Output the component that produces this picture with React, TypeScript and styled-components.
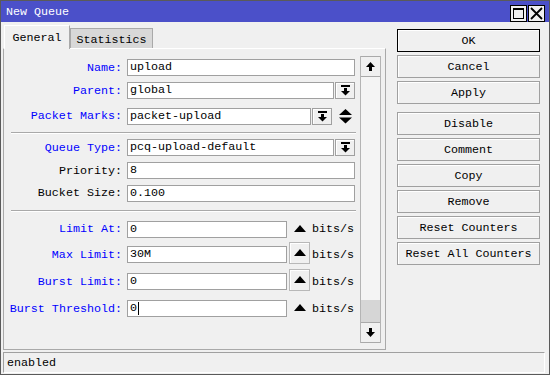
import styled, { createGlobalStyle } from "styled-components";

const GlobalStyle = createGlobalStyle`
  html, body {
    margin: 0;
    padding: 0;
    background: #f0f0f0;
  }
  body {
    font-family: "Liberation Mono", "DejaVu Sans Mono", monospace;
    font-size: 11.7px;
    color: #000;
  }
  * {
    box-sizing: border-box;
  }
`;

const BLUE = "#0000ff";

type FieldRow = {
  label: string;
  value: string;
  blue: boolean;
  height: number;
  kind: "text" | "select" | "marks" | "limit";
  arrow?: "plain" | "boxed";
  caret?: boolean;
};

const topRows: FieldRow[] = [
  { label: "Name:", value: "upload", blue: true, height: 23, kind: "text" },
  { label: "Parent:", value: "global", blue: true, height: 23, kind: "select" },
  { label: "Packet Marks:", value: "packet-upload", blue: true, height: 28, kind: "marks" },
];

const midRows: FieldRow[] = [
  { label: "Queue Type:", value: "pcq-upload-default", blue: true, height: 23, kind: "select" },
  { label: "Priority:", value: "8", blue: false, height: 23, kind: "text" },
  { label: "Bucket Size:", value: "0.100", blue: false, height: 22, kind: "text" },
];

const limitRows: FieldRow[] = [
  { label: "Limit At:", value: "0", blue: true, height: 24, kind: "limit", arrow: "plain" },
  { label: "Max Limit:", value: "30M", blue: true, height: 27, kind: "limit", arrow: "boxed" },
  { label: "Burst Limit:", value: "0", blue: true, height: 27, kind: "limit", arrow: "boxed" },
  { label: "Burst Threshold:", value: "0", blue: true, height: 27, kind: "limit", arrow: "plain", caret: true },
];

const actions = [
  "OK",
  "Cancel",
  "Apply",
  "Disable",
  "Comment",
  "Copy",
  "Remove",
  "Reset Counters",
  "Reset All Counters",
];

const DropIcon = () => (
  <svg width="9" height="11" viewBox="0 0 9 11">
    <rect x="0" y="0" width="9" height="2" fill="#000" />
    <rect x="3" y="3" width="3" height="3" fill="#000" />
    <polygon points="0,6 9,6 4.5,10.5" fill="#000" />
  </svg>
);

const TriangleUp = () => (
  <svg width="12" height="7" viewBox="0 0 12 7">
    <polygon points="6,0 12,7 0,7" fill="#000" />
  </svg>
);

const UpDownIcon = () => (
  <svg width="13" height="15" viewBox="0 0 13 15">
    <polygon points="6.5,0 13,6 0,6" fill="#000" />
    <polygon points="0,8.5 13,8.5 6.5,14.5" fill="#000" />
  </svg>
);

const ScrollArrow = ({ down }: { down?: boolean }) => (
  <svg width="9" height="9" viewBox="0 0 9 9" style={down ? { transform: "rotate(180deg)" } : undefined}>
    <polygon points="4.5,0 9,5 0,5" fill="#000" />
    <rect x="3" y="5" width="3" height="4" fill="#000" />
  </svg>
);

const renderRow = (row: FieldRow) => (
  <Row key={row.label} $h={row.height}>
    <Label $blue={row.blue}>{row.label}</Label>
    <Field>
      {row.kind === "limit" ? (
        <>
          <Box $w={160}>
            {row.value}
            {row.caret && <Caret />}
          </Box>
          <ArrowButton $boxed={row.arrow === "boxed"}>
            <TriangleUp />
          </ArrowButton>
          <Unit>bits/s</Unit>
        </>
      ) : (
        <>
          <Box>{row.value}</Box>
          {(row.kind === "select" || row.kind === "marks") && (
            <DropButton>
              <DropIcon />
            </DropButton>
          )}
          {row.kind === "marks" && (
            <Spinner>
              <UpDownIcon />
            </Spinner>
          )}
        </>
      )}
    </Field>
  </Row>
);

const App = () => {
  return (
    <>
      <GlobalStyle />
      <Window>
        <TitleBar>
          <Title>New Queue</Title>
          <TitleButtons>
            <TitleButton>
              <svg width="15" height="15" viewBox="0 0 15 15">
                <rect x="2.5" y="2.5" width="10" height="10" fill="none" stroke="#000" />
                <rect x="2" y="2" width="11" height="2" fill="#000" />
              </svg>
            </TitleButton>
            <TitleButton>
              <svg width="15" height="15" viewBox="0 0 15 15">
                <path d="M2 2 L13 13 M13 2 L2 13" stroke="#000" strokeWidth="1.8" />
              </svg>
            </TitleButton>
          </TitleButtons>
        </TitleBar>

        <Body>
          <LeftColumn>
            <Tabs>
              <Tab $active>General</Tab>
              <Tab>Statistics</Tab>
            </Tabs>
            <Panel>
              <Form>
                {topRows.map(renderRow)}
                <Divider $top={2} $bottom={2} />
                {midRows.map(renderRow)}
                <Divider $top={6} $bottom={5} />
                {limitRows.map(renderRow)}
              </Form>
              <ScrollBar>
                <ScrollButton>
                  <ScrollArrow />
                </ScrollButton>
                <Track>
                  <Thumb />
                </Track>
                <ScrollButton>
                  <ScrollArrow down />
                </ScrollButton>
              </ScrollBar>
            </Panel>
          </LeftColumn>

          <ButtonColumn>
            {actions.map((name) => (
              <ActionButton key={name} $primary={name === "OK"} $spaced={name === "Disable"}>
                {name}
              </ActionButton>
            ))}
          </ButtonColumn>
        </Body>

        <StatusBar>enabled</StatusBar>
      </Window>
    </>
  );
};

export default App;

const Window = styled.div`
  width: 550px;
  height: 375px;
  border: 1px solid #5a5a5a;
  background: #f0f0f0;
  display: flex;
  flex-direction: column;
`;

const TitleBar = styled.div`
  height: 21px;
  flex-shrink: 0;
  background: #4b50c9;
  color: #fff;
  display: flex;
  align-items: center;
  padding: 0 4px 0 5px;
`;

const Title = styled.div`
  flex: 1;
`;

const TitleButtons = styled.div`
  display: flex;
  gap: 1px;
  margin-top: 3px;
`;

const TitleButton = styled.div`
  width: 17px;
  height: 17px;
  border: 1px solid #000;
  background: #f0f0f0;
  display: flex;
  align-items: center;
  justify-content: center;
`;

const Body = styled.div`
  flex: 1;
  display: flex;
  align-items: flex-start;
  padding: 3px 0 0 2px;
`;

const LeftColumn = styled.div`
  width: 383px;
  display: flex;
  flex-direction: column;
`;

const Tabs = styled.div`
  height: 23px;
  display: flex;
  align-items: flex-end;
  padding-left: 1px;
`;

const Tab = styled.div<{ $active?: boolean }>`
  width: ${(p) => (p.$active ? "66px" : "83px")};
  height: ${(p) => (p.$active ? "24px" : "20px")};
  margin-bottom: ${(p) => (p.$active ? "-1px" : "0")};
  padding-top: ${(p) => (p.$active ? "0" : "2px")};
  background: ${(p) => (p.$active ? "#f0f0f0" : "#d8d8d8")};
  border: 1px solid #a9a9a9;
  border-top-color: ${(p) => (p.$active ? "#fff" : "#a9a9a9")};
  border-left-color: ${(p) => (p.$active ? "#fff" : "#a9a9a9")};
  border-bottom: none;
  position: relative;
  z-index: ${(p) => (p.$active ? 1 : 0)};
  display: flex;
  align-items: center;
  justify-content: center;
`;

const Panel = styled.div`
  height: 302px;
  border: 1px solid #a9a9a9;
  border-top-color: #fff;
  display: flex;
`;

const Form = styled.div`
  flex: 1;
  padding-top: 7px;
  display: flex;
  flex-direction: column;
`;

const Row = styled.div<{ $h: number }>`
  height: ${(p) => p.$h}px;
  display: flex;
  align-items: center;
`;

const Label = styled.div<{ $blue: boolean }>`
  width: 118px;
  margin-right: 5px;
  flex-shrink: 0;
  text-align: right;
  white-space: nowrap;
  color: ${(p) => (p.$blue ? BLUE : "#000")};
`;

const Field = styled.div`
  width: 228px;
  display: flex;
  align-items: center;
  gap: 1px;
`;

const Box = styled.div<{ $w?: number }>`
  ${(p) => (p.$w ? `width: ${p.$w}px; flex-shrink: 0;` : "flex: 1;")}
  height: 17px;
  border: 1px solid #a0a0a0;
  background: #fff;
  padding-left: 2px;
  line-height: 15px;
  white-space: nowrap;
  overflow: hidden;
  display: flex;
  align-items: center;
`;

const Caret = styled.span`
  width: 1px;
  height: 13px;
  background: #000;
  margin-left: 1px;
`;

const DropButton = styled.div`
  width: 20px;
  height: 17px;
  flex-shrink: 0;
  border: 1px solid #a0a0a0;
  box-shadow: inset 1px 1px #fff;
  background: #f0f0f0;
  display: flex;
  align-items: center;
  justify-content: center;
`;

const Spinner = styled.div`
  width: 22px;
  flex-shrink: 0;
  display: flex;
  justify-content: center;
  padding-left: 2px;
`;

const ArrowButton = styled.div<{ $boxed: boolean }>`
  width: 21px;
  height: 22px;
  margin: 0 0 ${(p) => (p.$boxed ? "4px" : "2px")} 1px;
  flex-shrink: 0;
  border: 1px solid ${(p) => (p.$boxed ? "#b8b8b8" : "transparent")};
  box-shadow: ${(p) => (p.$boxed ? "inset 1px 1px #fff" : "none")};
  display: flex;
  align-items: center;
  justify-content: center;
`;

const Unit = styled.div`
  margin-left: 1px;
`;

const Divider = styled.div<{ $top: number; $bottom: number }>`
  height: 0;
  margin: ${(p) => p.$top}px 4px ${(p) => p.$bottom}px 7px;
  border-top: 1px solid #a9a9a9;
  border-bottom: 1px solid #fff;
`;

const ScrollBar = styled.div`
  width: 21px;
  margin: 7px 4px 6px 0;
  border-left: 1px solid #b4b4b4;
  border-right: 1px solid #b4b4b4;
  display: flex;
  flex-direction: column;
`;

const ScrollButton = styled.div`
  height: 21px;
  flex-shrink: 0;
  border: 1px solid #a9a9a9;
  border-left: none;
  border-right: none;
  background: #f0f0f0;
  display: flex;
  align-items: center;
  justify-content: center;
`;

const Track = styled.div`
  flex: 1;
  display: flex;
  flex-direction: column;
  justify-content: flex-end;
  background: #f4f4f4;
`;

const Thumb = styled.div`
  height: 22px;
  background: #d6d6d6;
`;

const ButtonColumn = styled.div`
  width: 143px;
  margin: 4px 0 0 11px;
  display: flex;
  flex-direction: column;
  gap: 3px;
`;

const ActionButton = styled.div<{ $primary?: boolean; $spaced?: boolean }>`
  height: 23px;
  margin-top: ${(p) => (p.$spaced ? "5px" : "0")};
  border: 1px solid ${(p) => (p.$primary ? "#000" : "#a0a0a0")};
  box-shadow: inset 1px 1px #fff;
  background: #f0f0f0;
  display: flex;
  align-items: center;
  justify-content: center;
  white-space: nowrap;
`;

const StatusBar = styled.div`
  height: 21px;
  flex-shrink: 0;
  margin: 0 4px 1px 2px;
  padding-left: 3px;
  border: 1px solid;
  border-color: #a0a0a0 #fff #fff #a0a0a0;
  display: flex;
  align-items: center;
`;
